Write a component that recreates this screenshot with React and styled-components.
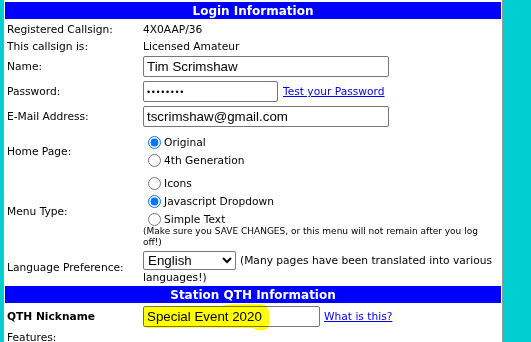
import React from "react";
import styled, { createGlobalStyle } from "styled-components";

const Global = createGlobalStyle`
  html, body { margin: 0; padding: 0; background: #00ced1; }
  body { font-family: "DejaVu Sans", Verdana, sans-serif; }
`;

const Panel = styled.div`
  margin-left: 3px;
  width: 500px;
  height: 342px;
  box-sizing: border-box;
  overflow: hidden;
  background: #ffffff;
  border-left: 1px solid #8c9c9c;
  border-right: 1px solid #8c9c9c;
  padding: 2px 1px 0;
  font-size: 10.67px;
  color: #000;
`;

const SectionBar = styled.div`
  height: 17px;
  background: #0000ff;
  color: #ffffff;
  font-weight: bold;
  font-size: 12px;
  display: flex;
  align-items: center;
  justify-content: center;
`;

const Row = styled.div`
  display: grid;
  grid-template-columns: 138px 1fr;
  align-items: center;
  height: ${(p) => p.$h}px;
  margin-top: ${(p) => p.$mt || 0}px;
`;

const Label = styled.div`
  padding-left: 2px;
  font-weight: ${(p) => (p.$bold ? "bold" : "normal")};
  white-space: nowrap;
`;

const Value = styled.div`
  display: flex;
  align-items: center;
  gap: ${(p) => p.$gap || 0}px;
`;

const TextInput = styled.input`
  box-sizing: border-box;
  width: ${(p) => p.$w}px;
  height: 21px;
  margin: 0;
  padding: 1px 3px;
  border: 1px solid #767676;
  border-radius: 2px;
  background: transparent;
  font-family: "Liberation Sans", Arial, sans-serif;
  font-size: 13.33px;
  color: #000;
  outline: none;
`;

const PasswordInput = styled(TextInput)`
  font-size: 9px;
  letter-spacing: 1.6px;
`;

const Link = styled.a`
  color: #0000ee;
  text-decoration: underline;
  cursor: pointer;
  white-space: nowrap;
`;

const RadioList = styled.div`
  display: flex;
  flex-direction: column;
`;

const RadioItem = styled.label`
  display: flex;
  align-items: center;
  height: 18px;
`;

const Radio = styled.input`
  width: 13px;
  height: 13px;
  margin: 0 3px 0 5px;
  accent-color: #0075ff;
`;

const Note = styled.div`
  font-size: 9px;
  line-height: 11px;
  width: 345px;
  margin-top: -2px;
`;

const LangCell = styled.div`
  line-height: 14px;
`;

const Select = styled.select`
  box-sizing: border-box;
  width: 93px;
  height: 19px;
  margin: 0 4px 1px 0;
  vertical-align: middle;
  font-family: "Liberation Sans", Arial, sans-serif;
  font-size: 13.33px;
  border: 1px solid #767676;
  border-radius: 2px;
  background: #fff;
  color: #000;
`;

const HighlightWrap = styled.div`
  position: relative;
  display: flex;
`;

const Highlight = styled.svg`
  position: absolute;
  left: 0;
  top: -3px;
  width: 128px;
  height: 28px;
  pointer-events: none;
  mix-blend-mode: multiply;
`;

export default function App() {
  return (
    <>
      <Global />
      <Panel>
        <SectionBar>Login Information</SectionBar>
        <Row $h={17} $mt={2}>
          <Label>Registered Callsign:</Label>
          <Value>4X0AAP/36</Value>
        </Row>
        <Row $h={16}>
          <Label>This callsign is:</Label>
          <Value>Licensed Amateur</Value>
        </Row>
        <Row $h={25}>
          <Label>Name:</Label>
          <Value>
            <TextInput $w={246} defaultValue="Tim Scrimshaw" />
          </Value>
        </Row>
        <Row $h={25}>
          <Label>Password:</Label>
          <Value $gap={5}>
            <PasswordInput $w={135} type="password" defaultValue="password" />
            <Link>Test your Password</Link>
          </Value>
        </Row>
        <Row $h={25}>
          <Label>E-Mail Address:</Label>
          <Value>
            <TextInput $w={246} defaultValue="tscrimshaw@gmail.com" />
          </Value>
        </Row>
        <Row $h={44}>
          <Label>Home Page:</Label>
          <RadioList>
            <RadioItem>
              <Radio type="radio" name="home" defaultChecked />
              Original
            </RadioItem>
            <RadioItem>
              <Radio type="radio" name="home" />
              4th Generation
            </RadioItem>
          </RadioList>
        </Row>
        <Row $h={76}>
          <Label>Menu Type:</Label>
          <RadioList>
            <RadioItem>
              <Radio type="radio" name="menu" />
              Icons
            </RadioItem>
            <RadioItem>
              <Radio type="radio" name="menu" defaultChecked />
              Javascript Dropdown
            </RadioItem>
            <RadioItem>
              <Radio type="radio" name="menu" />
              Simple Text
            </RadioItem>
            <Note>
              (Make sure you SAVE CHANGES, or this menu will not remain after
              you log off!)
            </Note>
          </RadioList>
        </Row>
        <Row $h={37}>
          <Label>Language Preference:</Label>
          <LangCell>
            <Select defaultValue="en">
              <option value="en">English</option>
            </Select>
            (Many pages have been translated into various languages!)
          </LangCell>
        </Row>
        <SectionBar>Station QTH Information</SectionBar>
        <Row $h={26}>
          <Label $bold>QTH Nickname</Label>
          <Value $gap={4}>
            <HighlightWrap>
              <TextInput $w={177} defaultValue="Special Event 2020" />
              <Highlight viewBox="0 0 128 28">
                <path
                  d="M1,4 Q40,3 78,3 Q90,0 118,1 Q126,2 126,12 Q127,22 124,26 Q116,29 110,25 Q60,24 4,25 Q0,24 0,14 Q0,5 1,4 Z"
                  fill="#ffff00"
                />
              </Highlight>
            </HighlightWrap>
            <Link>What is this?</Link>
          </Value>
        </Row>
        <Row $h={16}>
          <Label>Features:</Label>
          <Value />
        </Row>
      </Panel>
    </>
  );
}
